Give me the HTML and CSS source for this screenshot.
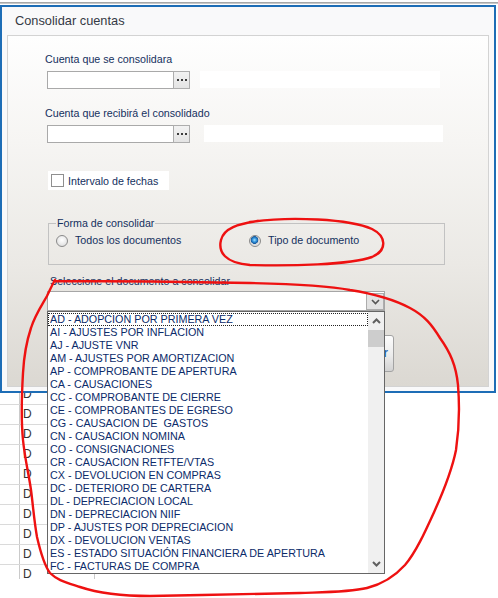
FILE: index.html
```html
<!DOCTYPE html>
<html>
<head>
<meta charset="utf-8">
<title>Consolidar cuentas</title>
<link rel="stylesheet" href="styles.css">
</head>
<body>
<div class="topbar"></div>
<div class="window">
  <div class="title">Consolidar cuentas</div>
  <div class="panel">
    <div class="lbl">Cuenta que se consolidara</div>
    <div class="field-row">
      <div class="tb"></div>
      <div class="dots"><svg width="15" height="15" viewBox="0 0 15 15"><rect x="3" y="6" width="2" height="2" fill="#3c3c3c"/><rect x="7" y="6" width="2" height="2" fill="#3c3c3c"/><rect x="11" y="6" width="2" height="2" fill="#3c3c3c"/></svg></div>
      <div class="desc d1"></div>
    </div>
    <div class="lbl lbl2">Cuenta que recibirá el consolidado</div>
    <div class="field-row">
      <div class="tb"></div>
      <div class="dots"><svg width="15" height="15" viewBox="0 0 15 15"><rect x="3" y="6" width="2" height="2" fill="#3c3c3c"/><rect x="7" y="6" width="2" height="2" fill="#3c3c3c"/><rect x="11" y="6" width="2" height="2" fill="#3c3c3c"/></svg></div>
      <div class="desc d2"></div>
    </div>
    <div class="chk"><span class="box"></span>Intervalo de fechas</div>
    <fieldset class="group">
      <legend>Forma de consolidar</legend>
      <div class="radios">
        <span class="opt o1"><span class="radio"></span>Todos los documentos</span>
        <span class="opt"><span class="radio on"></span>Tipo de documento</span>
      </div>
    </fieldset>
    <div class="lbl lbl3">Seleccione el documento a consolidar</div>
    <div class="combo">
      <div class="drop"><svg width="9" height="6" viewBox="0 0 9 6"><polyline points="1,1 4.5,4.5 8,1" fill="none" stroke="#555" stroke-width="1.6"/></svg></div>
      <div class="list">
        <div class="items">
          <div class="item focus">AD - ADOPCION POR PRIMERA VEZ</div>
          <div class="item">AI - AJUSTES POR INFLACION</div>
          <div class="item">AJ - AJUSTE VNR</div>
          <div class="item">AM - AJUSTES POR AMORTIZACION</div>
          <div class="item">AP - COMPROBANTE DE APERTURA</div>
          <div class="item">CA - CAUSACIONES</div>
          <div class="item">CC - COMPROBANTE DE CIERRE</div>
          <div class="item">CE - COMPROBANTES DE EGRESO</div>
          <div class="item">CG - CAUSACION DE &nbsp;GASTOS</div>
          <div class="item">CN - CAUSACION NOMINA</div>
          <div class="item">CO - CONSIGNACIONES</div>
          <div class="item">CR - CAUSACION RETFTE/VTAS</div>
          <div class="item">CX - DEVOLUCION EN COMPRAS</div>
          <div class="item">DC - DETERIORO DE CARTERA</div>
          <div class="item">DL - DEPRECIACION LOCAL</div>
          <div class="item">DN - DEPRECIACION NIIF</div>
          <div class="item">DP - AJUSTES POR DEPRECIACION</div>
          <div class="item">DX - DEVOLUCION VENTAS</div>
          <div class="item">ES - ESTADO SITUACIÓN FINANCIERA DE APERTURA</div>
          <div class="item">FC - FACTURAS DE COMPRA</div>
        </div>
        <div class="sbar">
          <div class="sbtn"><svg width="9" height="6" viewBox="0 0 9 6"><polyline points="1,5 4.5,1.5 8,5" fill="none" stroke="#606060" stroke-width="2"/></svg></div>
          <div class="thumb"></div>
          <div class="strack"></div>
          <div class="sbtn"><svg width="9" height="6" viewBox="0 0 9 6"><polyline points="1,1 4.5,4.5 8,1" fill="none" stroke="#606060" stroke-width="2"/></svg></div>
        </div>
      </div>
    </div>
    <div class="btn">Consolidar</div>
  </div>
</div>
<div class="grid">
  <div class="row"><span class="c0"></span><span class="c1">D</span></div>
  <div class="row"><span class="c0"></span><span class="c1">D</span></div>
  <div class="row"><span class="c0"></span><span class="c1">D</span></div>
  <div class="row"><span class="c0"></span><span class="c1">D</span></div>
  <div class="row"><span class="c0"></span><span class="c1">D</span></div>
  <div class="row"><span class="c0"></span><span class="c1">D</span></div>
  <div class="row"><span class="c0"></span><span class="c1">D</span></div>
  <div class="row"><span class="c0"></span><span class="c1">D</span></div>
  <div class="row"><span class="c0"></span><span class="c1">D</span></div>
  <div class="row last"><span class="c0"></span><span class="c1">D</span></div>
</div>
<svg class="marks" width="498" height="598" viewBox="0 0 498 598">
  <path d="M 250,222 C 290,216 350,219 372,229 C 386,236 388,250 372,257 C 350,265 290,266 250,265 C 225,263 218,252 221,240 C 224,228 238,224 258,221" />
  <path d="M 54,281 C 120,281 200,282 250,283 C 300,284 330,286 350,290 C 375,294 395,300 410,308 C 425,316 432,325 440,338 C 450,352 456,365 458,385 C 460,410 459,430 456,450 C 452,470 444,490 435,510 C 425,532 416,552 405,565 C 395,576 383,584 367,588 C 350,592 330,592 300,593 C 260,594 200,595 150,596 C 120,596 95,592 80,587 C 65,582 57,580 50,573 C 44,565 40,550 37,537 C 34,520 33,505 31,490 C 29,475 25,460 23,440 C 21,420 22,390 23,373 C 24,355 27,340 31,328 C 35,315 42,305 47,296 C 50,290 52,285 55,280" />
</svg>
</body>
</html>
```
FILE: styles.css
```css
html, body {
  margin: 0;
  padding: 0;
}
body {
  width: 498px;
  height: 598px;
  overflow: hidden;
  position: relative;
  background: #ffffff;
  font-family: "Liberation Sans", Arial, sans-serif;
}
.topbar {
  margin: 2px 0 1px;
  border-top: 1px solid #a8a8a8;
  border-bottom: 1px solid #c8c8c8;
}
.window {
  position: relative;
  z-index: 1;
  width: 496px;
  height: 388px;
  box-sizing: border-box;
  border: 2px solid #1d6db6;
  background: #f9f9fa;
  padding: 0 5px 4px;
}
.title {
  height: 28px;
  line-height: 28px;
  padding-left: 8px;
  font-size: 12.8px;
  color: #353a45;
}
.panel {
  height: 352px;
  box-sizing: border-box;
  border: 1px solid #d3d3d3;
  background: linear-gradient(#fefefe 0%, #f6f5f3 30%, #ebe9e5 65%, #dbd8d2 100%);
  padding: 17px 0 0 37px;
}
.lbl {
  font-size: 10.7px;
  line-height: 13px;
  height: 13px;
  color: #14305e;
  white-space: nowrap;
}
.lbl2 { margin-top: 18px; }
.lbl3 { margin-top: 10px; margin-left: 5px; }
.field-row {
  display: flex;
  margin: 5px 0 0 2px;
  height: 18px;
}
.tb {
  width: 126px;
  height: 18px;
  box-sizing: border-box;
  border: 1px solid #a9a9a9;
  border-right: none;
  background: #fff;
}
.dots {
  width: 17px;
  height: 18px;
  box-sizing: border-box;
  border: 1px solid #adadad;
  background: linear-gradient(#f2f2f2, #e4e4e4);
  display: flex;
  align-items: center;
  justify-content: center;
}
.desc {
  height: 17px;
  background: #fff;
}
.d1 { margin-left: 10px; width: 240px; }
.d2 { margin-left: 14px; width: 239px; }
.chk {
  display: flex;
  align-items: center;
  margin: 28px 0 0 3px;
  width: 121px;
  height: 19px;
  background: #fff;
  font-size: 10.7px;
  color: #14305e;
}
.box {
  width: 13px;
  height: 13px;
  box-sizing: border-box;
  border: 1px solid #8f8f8f;
  background: #fff;
  margin: 0 4px 0 3px;
}
.group {
  margin: 27px 0 0 3px;
  width: 397px;
  box-sizing: border-box;
  border: 1px solid #c2c2c2;
  padding: 0 0 17px 7px;
  min-width: 0;
}
.group legend {
  font-size: 10.7px;
  line-height: 13px;
  padding: 0 1px;
  color: #14305e;
}
.radios {
  display: flex;
  margin-top: 4px;
  height: 13px;
  font-size: 10.7px;
  line-height: 13px;
  color: #14305e;
}
.opt {
  display: flex;
  align-items: center;
  white-space: nowrap;
}
.o1 { width: 193px; }
.radio {
  width: 12px;
  height: 12px;
  box-sizing: border-box;
  border-radius: 50%;
  border: 1px solid #8a8a8a;
  background: radial-gradient(circle at 50% 40%, #ffffff 0, #f2f2f2 35%, #d6d6d6 100%);
  margin-right: 7px;
}
.radio.on {
  background: radial-gradient(circle at 45% 40%, #a8e2ff 0, #3a9be0 1.8px, #14589e 3.6px, #d9d9d9 4.1px, #f5f5f5 100%);
}
.combo {
  position: relative;
  margin: 3px 0 0 2px;
  width: 338px;
  height: 20px;
  box-sizing: border-box;
  border: 1px solid #a6a6a6;
  background: #fff;
  display: flex;
  justify-content: flex-end;
  padding-top: 1px;
}
.drop {
  width: 18px;
  height: 17px;
  box-sizing: border-box;
  border: 1px solid #adadad;
  background: #e3e3e3;
  display: flex;
  align-items: center;
  justify-content: center;
}
.list {
  position: absolute;
  z-index: 5;
  left: -1px;
  top: 19px;
  width: 338px;
  height: 263px;
  box-sizing: border-box;
  border: 1px solid #666666;
  background: #fff;
  display: flex;
}
.items {
  width: 320px;
  padding-top: 1px;
  overflow: hidden;
}
.item {
  height: 13px;
  line-height: 13px;
  padding-left: 2px;
  font-size: 10.75px;
  color: #0b2b6a;
  white-space: nowrap;
  box-sizing: border-box;
}
.item.focus {
  outline: 1px dotted #222;
  outline-offset: -1px;
}
.sbar {
  width: 16px;
  background: #f0f0f0;
  display: flex;
  flex-direction: column;
}
.sbtn {
  height: 18px;
  display: flex;
  align-items: center;
  justify-content: center;
}
.thumb {
  height: 17px;
  background: #cdcdcd;
}
.strack { flex: 1; }
.btn {
  margin: 24px 0 0 269px;
  width: 80px;
  height: 37px;
  box-sizing: border-box;
  border: 1px solid #a3a3a3;
  border-radius: 3px;
  background: linear-gradient(#fdfdfd, #ececec 55%, #d2d2d2);
  text-align: right;
  padding-right: 5px;
  line-height: 35px;
  font-size: 12px;
  font-weight: bold;
  color: #2463b4;
}
.grid {
  margin-top: -8px;
  width: 200px;
}
.row {
  display: flex;
  height: 20px;
  box-sizing: border-box;
  border-bottom: 1px solid #dadada;
}
.row.last {
  height: 14px;
  border-bottom: none;
}
.c0 {
  width: 20px;
  box-sizing: border-box;
  border-right: 1px solid #cacaca;
}
.c1 {
  width: 75px;
  box-sizing: border-box;
  border-right: 1px solid #cacaca;
  padding-left: 3px;
  font-size: 12px;
  line-height: 19px;
  color: #333;
}
.marks {
  position: absolute;
  left: 0;
  top: 0;
  z-index: 10;
  pointer-events: none;
  fill: none;
  stroke: #ee1111;
  stroke-width: 2.4;
  stroke-linecap: round;
  stroke-linejoin: round;
}
```
